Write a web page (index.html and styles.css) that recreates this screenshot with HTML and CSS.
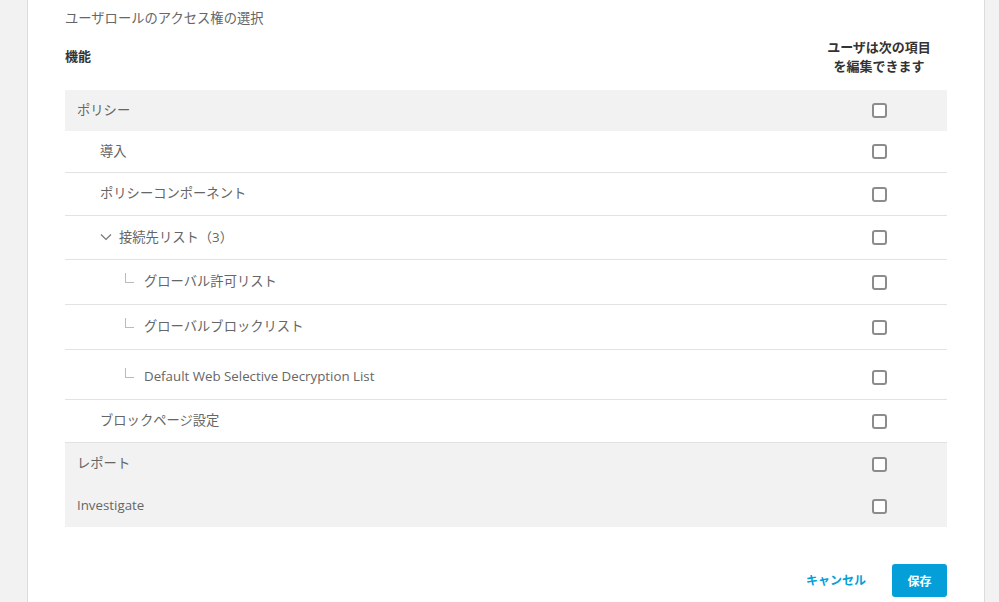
FILE: index.html
```html
<!DOCTYPE html>
<html lang="ja">
  <head>
    <meta charset="UTF-8" />
    <meta name="viewport" content="width=device-width, initial-scale=1.0" />
    <title>ユーザロール</title>
    <link rel="stylesheet" href="styles.css">
  </head>
  <body>
    <div class="panel">
      <div class="title">ユーザロールのアクセス権の選択</div>

      <div class="head">
        <div class="head-name">機能</div>
        <div class="head-check">ユーザは次の項目<br />を編集できます</div>
      </div>

      <div class="perm-table">
        <div class="row shaded h41">
          <div class="name lv0">ポリシー</div>
          <div class="check"><span class="box"></span></div>
        </div>
        <div class="row lined h41">
          <div class="name lv1">導入</div>
          <div class="check"><span class="box"></span></div>
        </div>
        <div class="row lined h42">
          <div class="name lv1">ポリシーコンポーネント</div>
          <div class="check"><span class="box"></span></div>
        </div>
        <div class="row lined h43">
          <div class="name lv1">
            <svg class="chev" width="12" height="8" viewBox="0 0 12 8">
              <path d="M1 1.5 L6 6.5 L11 1.5" fill="none" stroke="#777" stroke-width="1.2" />
            </svg>
            接続先リスト（3）
          </div>
          <div class="check"><span class="box"></span></div>
        </div>
        <div class="row lined h44">
          <div class="name lv2"><span class="elbow"></span>グローバル許可リスト</div>
          <div class="check"><span class="box"></span></div>
        </div>
        <div class="row lined h44">
          <div class="name lv2"><span class="elbow"></span>グローバルブロックリスト</div>
          <div class="check"><span class="box"></span></div>
        </div>
        <div class="row lined h49 low">
          <div class="name lv2"><span class="elbow"></span>Default Web Selective Decryption List</div>
          <div class="check"><span class="box"></span></div>
        </div>
        <div class="row lined h42">
          <div class="name lv1">ブロックページ設定</div>
          <div class="check"><span class="box"></span></div>
        </div>
        <div class="row shaded h42">
          <div class="name lv0">レポート</div>
          <div class="check"><span class="box"></span></div>
        </div>
        <div class="row shaded h42">
          <div class="name lv0">Investigate</div>
          <div class="check"><span class="box"></span></div>
        </div>
      </div>

      <div class="actions">
        <button class="btn-link">キャンセル</button>
        <button class="btn-primary">保存</button>
      </div>
    </div>
  </body>
</html>
```

FILE: styles.css
```css
body {
  margin: 0;
  background-color: #f2f2f2;
  font-family: "Open Sans", "Noto Sans CJK JP", sans-serif;
  color: #666;
}
.panel {
  margin-left: 27px;
  width: 882px;
  padding: 8px 37px 0 37px;
  background-color: #fff;
  border-left: 1px solid #dcdcdc;
  border-right: 1px solid #dcdcdc;
  height: 594px;
  overflow: hidden;
}
.title {
  font-size: 13.3px;
  line-height: 20px;
  color: #666;
}
.head {
  display: flex;
  align-items: center;
  margin-top: 10px;
  height: 38px;
  margin-bottom: 14px;
}
.head-name {
  flex: 1;
  font-size: 13px;
  font-weight: bold;
  color: #333;
  padding-bottom: 3px;
}
.head-check {
  width: 136px;
  text-align: center;
  font-size: 13px;
  line-height: 19px;
  font-weight: bold;
  color: #333;
}
.row {
  display: flex;
  align-items: center;
}
.shaded {
  background-color: #f2f2f2;
}
.lined {
  border-bottom: 1px solid #e2e2e2;
}
.h41 { height: 41px; }
.h42 { height: 42px; }
.h43 { height: 43px; }
.h44 { height: 44px; }
.h49 { height: 49px; }
.low {
  padding-top: 5px;
  height: 44px;
}
.name {
  flex: 1;
  display: flex;
  align-items: center;
  font-size: 13.3px;
  color: #666;
  padding-bottom: 3px;
}
.lv0 {
  padding-left: 12px;
}
.lv1 {
  padding-left: 35px;
}
.lv2 {
  padding-left: 60px;
}
.chev {
  margin-right: 7px;
  margin-top: 1px;
}
.elbow {
  display: inline-block;
  width: 8px;
  height: 9px;
  border-left: 1px solid #bbb;
  border-bottom: 1px solid #bbb;
  margin-right: 10px;
  margin-top: -6px;
}
.check {
  width: 136px;
  display: flex;
  justify-content: center;
}
.box {
  display: block;
  width: 11px;
  height: 11px;
  border: 2px solid #8c8c8c;
  border-radius: 3px;
  background-color: #fff;
}
.actions {
  display: flex;
  justify-content: flex-end;
  align-items: center;
  margin-top: 37px;
  gap: 26px;
}
.btn-link {
  border: none;
  background: none;
  padding: 0;
  font-family: "Open Sans", "Noto Sans CJK JP", sans-serif;
  font-size: 12px;
  font-weight: bold;
  color: #049fd9;
  margin-top: -2px;
}
.btn-primary {
  width: 55px;
  height: 33px;
  border: none;
  border-radius: 3px;
  background-color: #049fd9;
  color: #fff;
  font-family: "Open Sans", "Noto Sans CJK JP", sans-serif;
  font-size: 12px;
  font-weight: bold;
}
```
